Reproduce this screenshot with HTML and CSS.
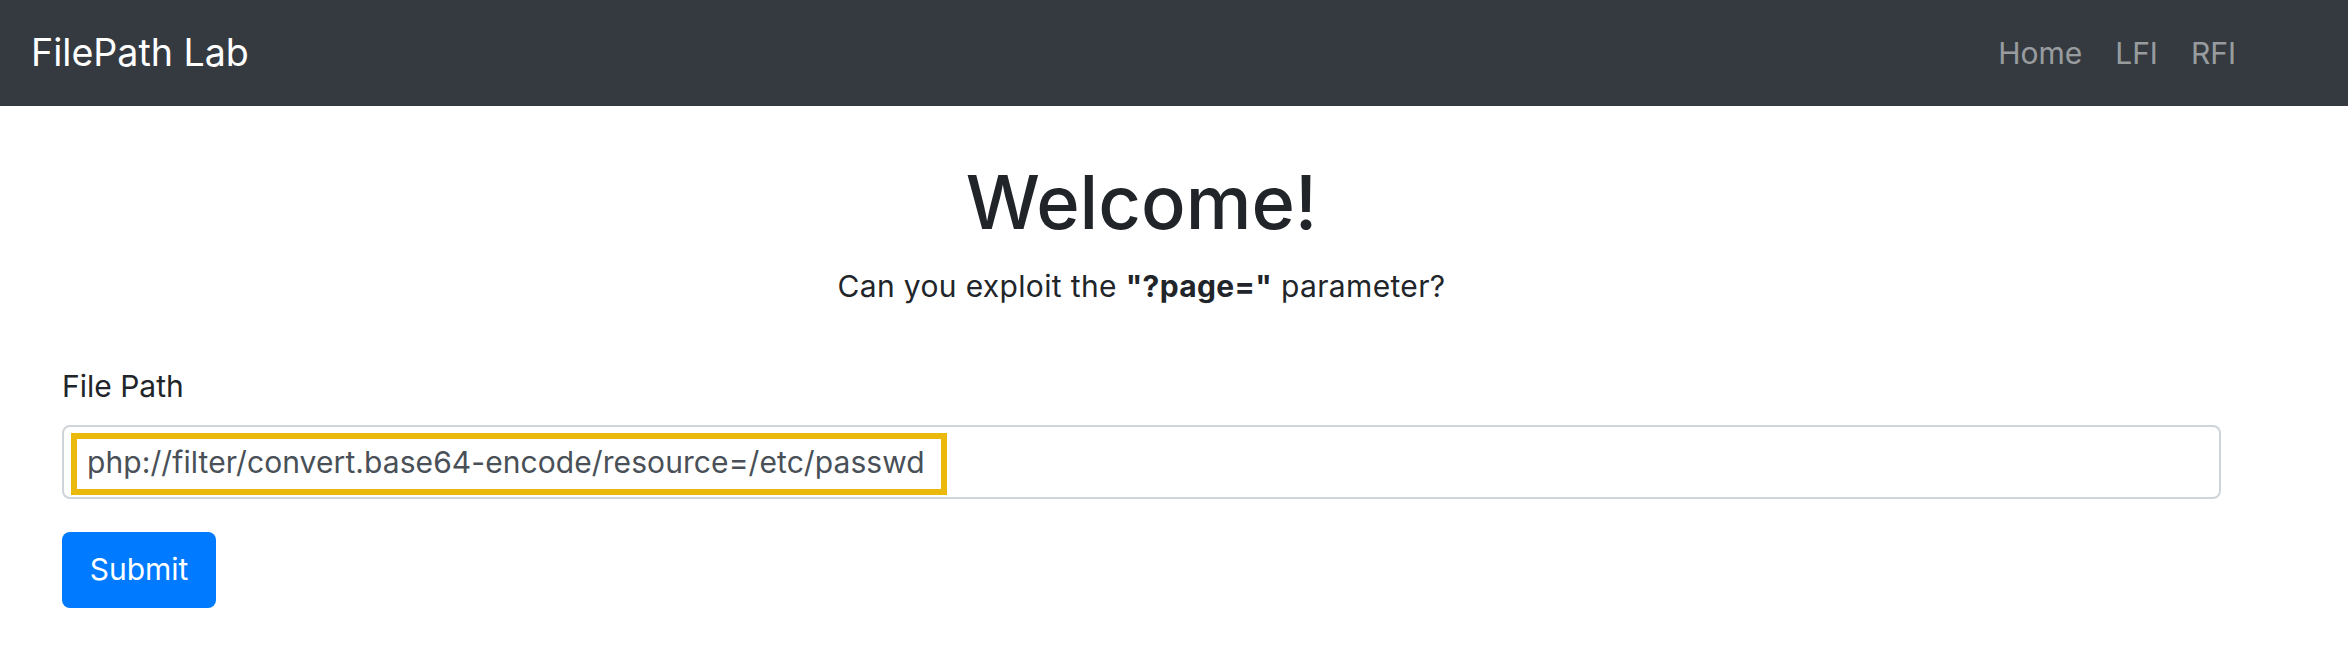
FILE: index.html
```html
<!DOCTYPE html>
<html lang="en">
<head>
<meta charset="utf-8">
<title>FilePath Lab</title>
<link rel="stylesheet" href="styles.css">
</head>
<body>
<nav class="navbar">
  <a class="brand" href="#">FilePath Lab</a>
  <ul class="nav">
    <li><a class="nav-link" href="#">Home</a></li>
    <li><a class="nav-link" href="#">LFI</a></li>
    <li><a class="nav-link" href="#">RFI</a></li>
  </ul>
</nav>
<main class="container">
  <section class="hero">
    <h1 class="title">Welcome!</h1>
    <p class="lead">Can you exploit the <b>"?page="</b> parameter?</p>
  </section>
  <form class="form">
    <label class="label" for="path">File Path</label>
    <div class="field">
      <input class="input" id="path" type="text" value="php://filter/convert.base64-encode/resource=/etc/passwd">
      <span class="highlight"></span>
    </div>
    <button class="btn" type="button">Submit</button>
  </form>
</main>
</body>
</html>
```
FILE: styles.css
```css
* { box-sizing: border-box; }
html, body { margin: 0; padding: 0; }
body {
  font-family: Inter, "Liberation Sans", Arial, sans-serif;
  font-size: 30px;
  line-height: 1.5;
  color: #212529;
  background: #fff;
}
.navbar {
  height: 106px;
  background: #343a40;
  display: flex;
  align-items: center;
  justify-content: space-between;
  padding: 0 112px 0 31px;
}
.brand {
  color: #fff;
  text-decoration: none;
  font-size: 37.6px;
  line-height: 1;
}
.nav {
  list-style: none;
  margin: 0;
  padding: 0;
  display: flex;
  gap: 33px;
}
.nav-link {
  color: rgba(255,255,255,0.5);
  text-decoration: none;
  font-size: 30px;
}
.container {
  padding: 0 127px 0 62px;
}
.hero {
  text-align: center;
  padding-top: 52px;
}
.title {
  margin: 0;
  font-size: 74px;
  font-weight: 500;
  line-height: 1.2;
}
.lead {
  margin: 17px 0 0;
  letter-spacing: 0.35px;
}
.form {
  margin-top: 55px;
  display: flex;
  flex-direction: column;
  align-items: flex-start;
}
.label {
  display: block;
  margin-bottom: 16px;
}
.field {
  position: relative;
  width: 100%;
}
.input {
  display: block;
  width: 100%;
  height: 74px;
  padding: 0 23px;
  font: inherit;
  letter-spacing: 0.08px;
  color: #495057;
  background: #fff;
  border: 2px solid #ced4da;
  border-radius: 8px;
  outline: none;
}
.highlight {
  position: absolute;
  left: 9px;
  top: 8px;
  width: 876px;
  height: 62px;
  border: 6px solid #ebb90c;
  pointer-events: none;
}
.btn {
  margin-top: 33px;
  width: 154px;
  height: 76px;
  font: inherit;
  color: #fff;
  background: #007bff;
  border: none;
  border-radius: 8px;
  padding: 0;
}
```
